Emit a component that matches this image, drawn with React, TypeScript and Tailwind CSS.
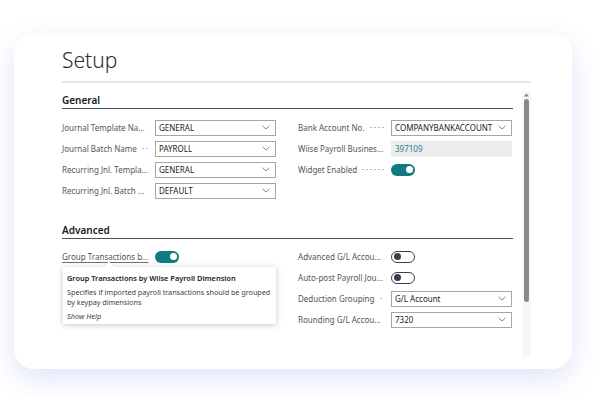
import React from "react";

const font = { fontFamily: '"Noto Sans", "Open Sans", sans-serif' };

function Chevron() {
  return (
    <svg width="8" height="5" viewBox="0 0 8 5" className="shrink-0">
      <path d="M0.5 0.8 L4 4 L7.5 0.8" fill="none" stroke="#6b6b6b" strokeWidth="0.8" />
    </svg>
  );
}

function Leader() {
  return (
    <span className="flex-1 h-[3px] mx-[4px] bg-[radial-gradient(circle,#b8b8b8_0.7px,transparent_0.9px)] bg-[length:4px_3px] bg-repeat-x" />
  );
}

function Label({ text, underline }: { text: string; underline?: boolean }) {
  return (
    <div className="w-[93px] flex items-center pr-[3px] shrink-0">
      <span
        className={
          "whitespace-nowrap text-[8px] text-[#555555] " +
          (underline ? "underline decoration-[#707070] underline-offset-2" : "")
        }
      >
        {text}
      </span>
      <Leader />
    </div>
  );
}

function Select({ value }: { value: string }) {
  return (
    <div className="w-[121px] h-[16px] border border-[#a6a6a6] bg-white flex items-center justify-between pl-[3px] pr-[5px]">
      <span className="text-[8px] text-[#212121] whitespace-nowrap">{value}</span>
      <Chevron />
    </div>
  );
}

function ReadOnly({ value }: { value: string }) {
  return (
    <div className="w-[121px] h-[16px] bg-[#ececec] flex items-center pl-[4px]">
      <span className="text-[8px] text-[#2b7f94]">{value}</span>
    </div>
  );
}

function Toggle({ on }: { on: boolean }) {
  return on ? (
    <div className="w-[24px] h-[12px] rounded-full bg-[#107c80] flex items-center justify-end pr-[2px]">
      <div className="w-[7px] h-[7px] rounded-full bg-white" />
    </div>
  ) : (
    <div className="w-[24px] h-[12px] rounded-full border border-[#3a3f4c] bg-white flex items-center pl-[2px]">
      <div className="w-[7px] h-[7px] rounded-full bg-[#3a3f4c]" />
    </div>
  );
}

function Row({ children }: { children: React.ReactNode }) {
  return <div className="h-[21px] flex items-center">{children}</div>;
}

function SectionTitle({ text }: { text: string }) {
  return (
    <div className="border-b border-[#4a4f5c] leading-[14px] pb-[1px]">
      <span className="text-[10px] font-semibold text-[#212121]">{text}</span>
    </div>
  );
}

export default function App() {
  return (
    <div className="w-[600px] h-[398px] bg-white overflow-hidden" style={font}>
      <div className="pt-[33px] pl-[14px]">
        <div className="w-[558px] h-[336px] bg-white rounded-[20px] shadow-[0_10px_28px_rgba(100,120,230,0.2)] pl-[48px] pr-[41px] pt-[10px]">
          <div className="text-[21px] font-light text-[#2a2a2a] leading-[34px] pb-[4px] border-b-2 border-[#e6e6e6]">
            Setup
          </div>
          <div className="flex">
            <div className="w-[452px] pt-[8px]">
              <SectionTitle text="General" />
              <div className="flex justify-between pt-[8px]">
                <div className="flex flex-col">
                  <Row><Label text="Journal Template Na..." /><Select value="GENERAL" /></Row>
                  <Row><Label text="Journal Batch Name" /><Select value="PAYROLL" /></Row>
                  <Row><Label text="Recurring Jnl. Templa..." /><Select value="GENERAL" /></Row>
                  <Row><Label text="Recurring Jnl. Batch ..." /><Select value="DEFAULT" /></Row>
                </div>
                <div className="flex flex-col mr-[1px]">
                  <Row><Label text="Bank Account No." /><Select value="COMPANYBANKACCOUNT" /></Row>
                  <Row><Label text="Wiise Payroll Busines..." /><ReadOnly value="397109" /></Row>
                  <Row><Label text="Widget Enabled" /><Toggle on /></Row>
                </div>
              </div>
              <div className="pt-[20px]">
                <SectionTitle text="Advanced" />
              </div>
              <div className="flex justify-between pt-[7px]">
                <div className="flex flex-col relative">
                  <Row><Label text="Group Transactions b..." underline /><Toggle on /></Row>
                  <div className="absolute left-[1px] top-[21px] w-[213px] bg-white shadow-[0_1px_6px_rgba(0,0,0,0.22)] px-[4px] pt-[5px] pb-[2px] z-10">
                    <div className="absolute -top-[4px] left-[42px] w-[8px] h-[8px] bg-white rotate-45 shadow-[-1px_-1px_2px_rgba(0,0,0,0.08)]" />
                    <div className="relative text-[7.4px] font-semibold text-[#212121] leading-[12px]">
                      Group Transactions by Wiise Payroll Dimension
                    </div>
                    <div className="relative text-[7.3px] text-[#444] leading-[10px] mt-[3px] tracking-[-0.05px]">
                      Specifies if imported payroll transactions should be grouped by keypay dimensions
                    </div>
                    <div className="relative text-[7.4px] italic text-[#444] leading-[12px] mt-[3px]">Show Help</div>
                  </div>
                </div>
                <div className="flex flex-col mr-[1px]">
                  <Row><Label text="Advanced G/L Accou..." /><Toggle on={false} /></Row>
                  <Row><Label text="Auto-post Payroll Jou..." /><Toggle on={false} /></Row>
                  <Row><Label text="Deduction Grouping" /><Select value="G/L Account" /></Row>
                  <Row><Label text="Rounding G/L Accou..." /><Select value="7320" /></Row>
                </div>
              </div>
            </div>
            <div className="ml-[9px] w-[9px] mt-[8px] h-[266px] bg-[#f7f7f7] flex flex-col items-center">
              <svg width="5" height="4" viewBox="0 0 5 4" className="mt-[2px]">
                <path d="M0 3.5 L2.5 0.5 L5 3.5 Z" fill="#888" />
              </svg>
              <div className="mt-[2px] w-[5px] h-[203px] rounded-full bg-[#8a8a8a]" />
            </div>
          </div>
        </div>
      </div>
    </div>
  );
}
